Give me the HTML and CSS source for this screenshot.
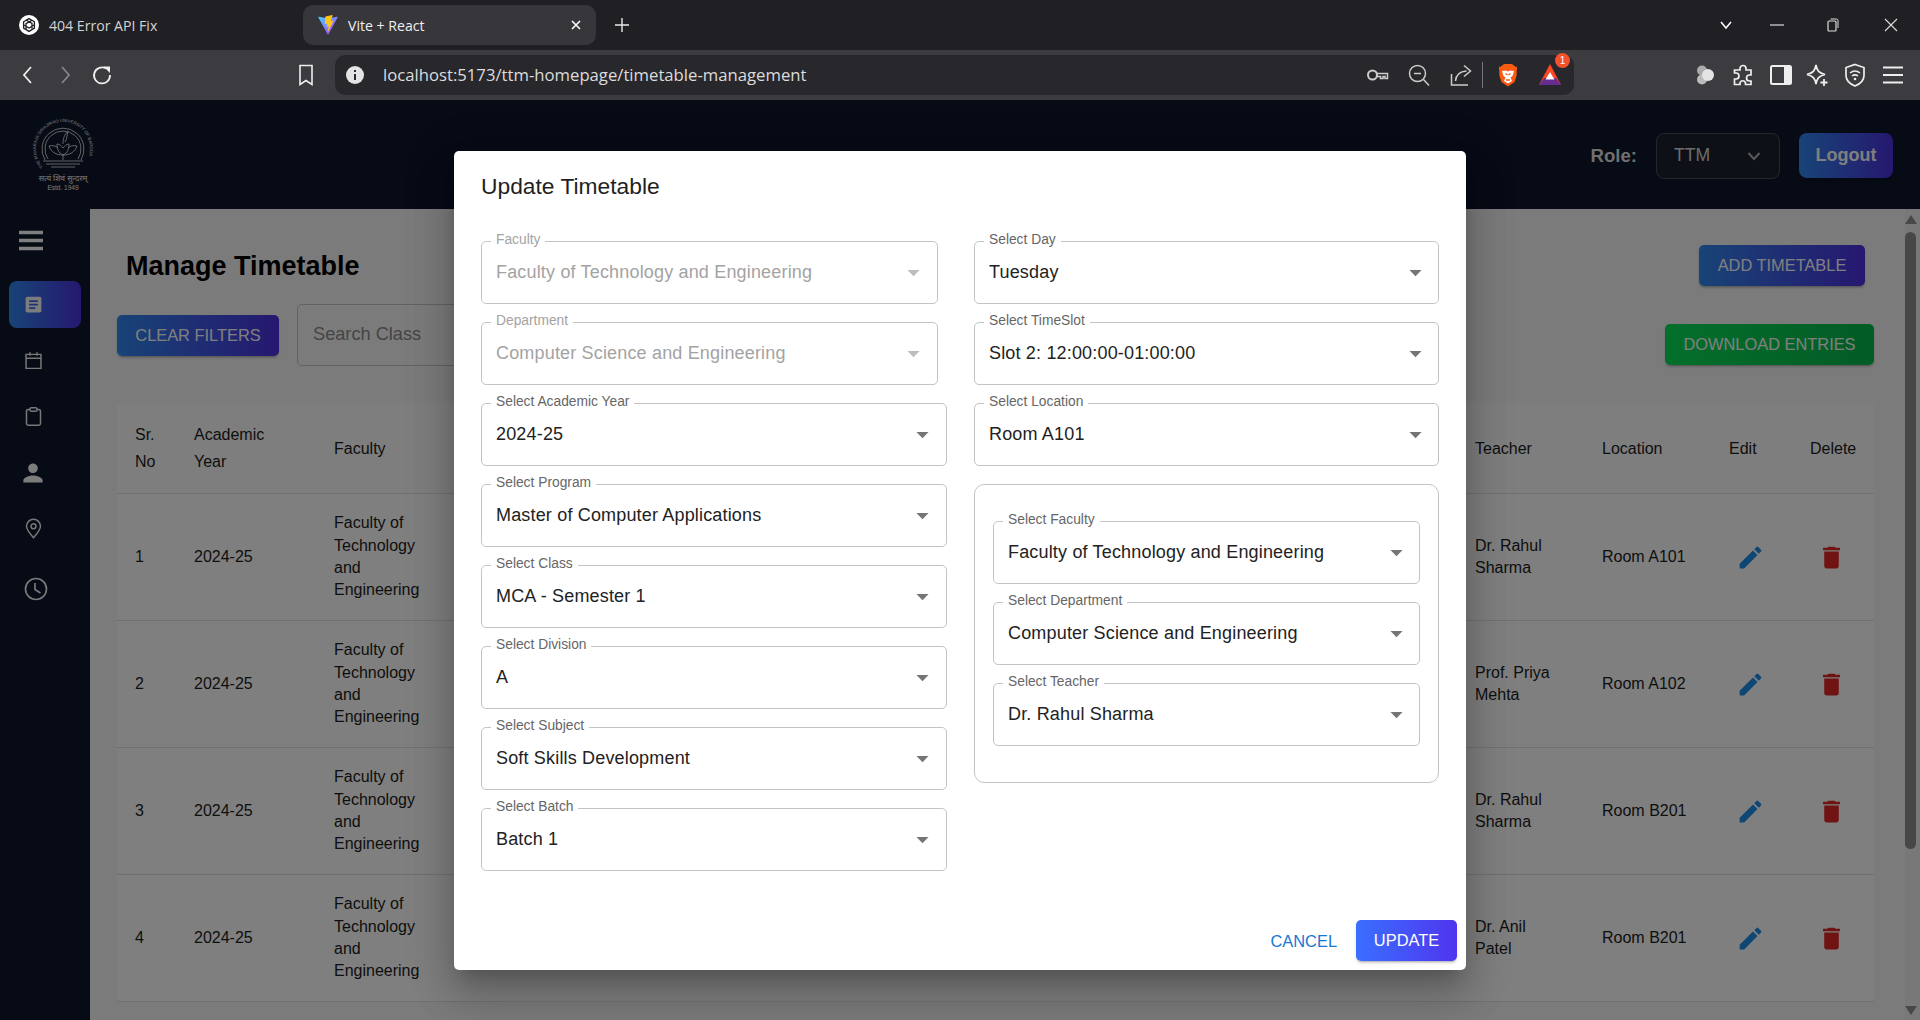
FILE: index.html
```html
<!DOCTYPE html>
<html lang="en">

<head>
    <meta charset="UTF-8">
    <title>Vite + React</title>
    <link rel="stylesheet" href="styles.css">
</head>

<body>
    <div class="tabbar">
        <div class="tab">
            <svg class="favicon" viewBox="0 0 20 20"><circle cx="10" cy="10" r="10" fill="#fff"/><g fill="none" stroke="#202024" stroke-width="1.3"><path d="M10 3.6l5.4 3.2v6.3L10 16.4l-5.4-3.3V6.8z"/><path d="M7 5l6 3.4v5.4M13 5.2L7 8.6v5.6M4.8 10l5.2 3 5.2-3"/></g></svg>
            <span>404 Error API Fix</span>
        </div>
        <div class="tab tab-active">
            <svg class="favicon" viewBox="0 0 20 20"><defs><linearGradient id="vt" x1="0" y1="0" x2="1" y2="1"><stop offset="0" stop-color="#41d1ff"/><stop offset="1" stop-color="#bd34fe"/></linearGradient></defs><path d="M19.6 2.6L10.5 19.3c-.2.4-.7.4-.9 0L.4 2.6c-.2-.4.1-.9.6-.8l9.1 1.6 8.9-1.6c.5-.1.8.4.6.8z" fill="url(#vt)"/><path d="M14.3.1L7.5 1.4c-.1 0-.2.1-.2.3l-.4 7.1c0 .2.1.3.3.3l1.9-.4c.2 0 .3.1.3.3l-.6 2.7c0 .2.1.3.3.3l1.2-.4c.2 0 .3.1.3.3l-.9 4.5c-.1.3.3.4.4.2l.1-.2 5.2-10.4c.1-.2-.1-.4-.3-.3l-2 .4c-.2 0-.3-.1-.3-.3L14.6.5c.1-.2-.1-.4-.3-.4z" fill="#ffc517"/></svg>
            <span>Vite + React</span>
            <svg class="tab-close" viewBox="0 0 10 10"><path d="M1 1l8 8M9 1L1 9" stroke="#fff" stroke-width="1.6"/></svg>
        </div>
        <svg class="new-tab" viewBox="0 0 14 14"><path d="M7 0v14M0 7h14" stroke="#e8e8e8" stroke-width="1.4"/></svg>
        <div class="window-btns">
            <svg viewBox="0 0 14 14"><path d="M2 4l5 6 5-6" fill="none" stroke="#fff" stroke-width="1.5"/></svg>
            <svg viewBox="0 0 14 14"><path d="M0 7h14" stroke="#ddd" stroke-width="1.2"/></svg>
            <svg viewBox="0 0 14 14"><rect x="2" y="3" width="8" height="10" rx="1" fill="none" stroke="#ddd" stroke-width="1.2"/><path d="M4.500 1h6a1.500 1.500 0 0 1 1.500 1.500V10" fill="none" stroke="#ddd"/></svg>
            <svg viewBox="0 0 14 14"><path d="M1 1l12 12M13 1L1 13" stroke="#ddd" stroke-width="1.1"/></svg>
        </div>
    </div>

    <div class="toolbar">
        <svg class="nav-icon" viewBox="0 0 24 24"><path d="M15 4l-7 8 7 8" fill="none" stroke="#eee" stroke-width="1.8"/></svg>
        <svg class="nav-icon nav-forward" viewBox="0 0 24 24"><path d="M9 4l7 8-7 8" fill="none" stroke="#85858a" stroke-width="1.8"/></svg>
        <svg class="nav-icon nav-reload" viewBox="0 0 24 24"><path d="M16 5.500A8 8 0 1 0 20 12" fill="none" stroke="#eee" stroke-width="1.8"/><path d="M13.500 3.500h6.500v6.500z" fill="#eee"/></svg>
        <svg class="nav-icon nav-mark" viewBox="0 0 24 24"><path d="M6 2.500h12v19l-6-4-6 4z" fill="none" stroke="#eee" stroke-width="1.6"/></svg>
        <div class="address">
            <svg class="info" viewBox="0 0 18 18"><circle cx="9" cy="9" r="9" fill="#e4e4e4"/><path d="M9 4v2M9 8v6" stroke="#2a2a2e" stroke-width="2"/></svg>
            <span class="url">localhost:5173/ttm-homepage/timetable-management</span>
            <div class="address-icons">
                <svg viewBox="0 0 24 24"><circle cx="7.500" cy="12" r="4.500" fill="none" stroke="#ccc" stroke-width="2"/><path d="M12 10.500h10.500v5H20v-2h-2v2h-2.500v-2H12" fill="none" stroke="#ccc" stroke-width="1.500"/></svg>
                <svg viewBox="0 0 24 24"><circle cx="10.500" cy="10.500" r="8" fill="none" stroke="#ccc" stroke-width="1.500"/><path d="M7 10.500h7M16.500 16.500l5.500 6" stroke="#ccc" stroke-width="1.500"/></svg>
                <svg viewBox="0 0 24 24"><path d="M2.500 11v11h16.500M6.500 18c.5-6 4-9.500 11-10" fill="none" stroke="#ccc" stroke-width="1.500"/><path d="M15 2.500l6.500 5.500-6.500 5.500" fill="none" stroke="#ccc" stroke-width="1.500"/></svg>
                <i class="address-sep"></i>
                <svg viewBox="0 0 24 24"><path d="M5 3.500L8 1h8l3 2.500 2 .5-.5 9-2 6-6.500 4.500L5.500 19l-2-6-.5-9z" fill="#fb5a12"/><path d="M6 8l4-.5 2 1 2-1 4 .5-1.500 5-2 1.500L16 18l-4 2.500L8 18l1.500-3.500-2-1.500z" fill="#fff"/><path d="M9.500 10.500l2 1.500M14.500 10.500l-2 1.500M10 17h4" stroke="#fb5a12" stroke-width="1.300"/></svg>
                <div class="bat">
                    <svg viewBox="0 0 24 24"><path d="M12 1l11 21H1z" fill="#ff4724"/><path d="M1 22l5-7h12l5 7z" fill="#662d91"/><path d="M12 9l4.500 7.500h-9z" fill="#fff"/></svg>
                    <span class="bat-count">1</span>
                </div>
            </div>
        </div>
        <div class="ext-icons">
            <svg viewBox="0 0 24 24"><circle cx="9" cy="7.500" r="5" fill="#aaa"/><circle cx="9" cy="16.500" r="5" fill="#bbb"/><circle cx="15" cy="12" r="6" fill="#e4e4e4"/></svg>
            <svg viewBox="0 0 24 24"><path d="M9 5.500a3 3 0 0 1 6 0V7h5v5h-1.500a3 3 0 0 0 0 6H20v3.500h-5.500V20a2.800 2.800 0 0 0-5.500 0v1.500H3.500V16H5a3 3 0 0 0 0-6H3.500V7H9z" fill="none" stroke="#eee" stroke-width="1.700"/></svg>
            <svg viewBox="0 0 24 24"><rect x="2" y="3" width="20" height="18" rx="1.500" fill="none" stroke="#eee" stroke-width="2"/><rect x="15" y="3" width="7" height="18" fill="#eee"/></svg>
            <svg viewBox="0 0 24 24"><path d="M11 2c1 6 3 8 9 9.500-6 1.500-8 3.500-9 9.500-1-6-3-8-9-9.500 6-1.500 8-3.500 9-9.500z" fill="none" stroke="#eee" stroke-width="1.700"/><path d="M19 16v7M15.500 19.500h7" stroke="#eee" stroke-width="1.800"/></svg>
            <svg viewBox="0 0 24 24"><path d="M12 1.500l9 3v8c0 5-4 8.500-9 10.500-5-2-9-5.500-9-10.500v-8z" fill="none" stroke="#eee" stroke-width="1.700"/><path d="M7 10c3-2.500 7-2.500 10 0M9 13c2-1.500 4-1.500 6 0" fill="none" stroke="#eee" stroke-width="1.500"/><circle cx="12" cy="16" r="1.300" fill="#eee"/></svg>
            <svg viewBox="0 0 24 24"><path d="M2 4.500h20M2 12h20M2 19.500h20" stroke="#eee" stroke-width="2"/></svg>
        </div>
    </div>

    <div class="app">
        <header class="app-header">
            <div class="logo">
                <svg class="logo-mark" viewBox="0 -8 66 62">
                    <defs><path id="logoArc" d="M13 49A27 27 0 1 1 53 49"/></defs>
                    <text class="logo-ring"><textPath href="#logoArc">THE MAHARAJA SAYAJIRAO UNIVERSITY OF BARODA</textPath></text>
                    <g fill="none" stroke="#f4f4f4" stroke-width=".8">
                        <path d="M15 42A21 21 0 1 1 51 42"/>
                        <path d="M18 41A18 18 0 1 1 48 41"/>
                        <path d="M33 37c-5-2-6-7-6-11 3 0 4 2 6 4 2-2 3-4 6-4 0 4-1 9-6 11z"/>
                        <path d="M33 37c-7 0-12-3-14-9 4-1 7 0 9 2M33 37c7 0 12-3 14-9-4-1-7 0-9 2"/>
                        <path d="M33 37v5M33 26c0-5 1-9 5-13-1 4-1 8-3 11"/>
                        <path d="M13 43h40M16 46h34M21 49h24"/>
                    </g>
                </svg>
                <span class="logo-motto">सत्यं शिवं सुन्दरम्</span>
                <span class="logo-estd">Estd. 1949</span>
            </div>
            <div class="role">
                <span class="role-label">Role:</span>
                <div class="role-select">
                    <span>TTM</span>
                    <svg viewBox="0 0 14 14"><path d="M1.500 4l5.500 6 5.500-6" fill="none" stroke="#b0b0b0" stroke-width="2"/></svg>
                </div>
                <button class="btn btn-logout">Logout</button>
            </div>
        </header>

        <div class="app-body">
            <nav class="sidebar">
                <svg class="side-burger" viewBox="0 0 24 21"><path d="M0 2.500h24M0 10.500h24M0 18.500h24" stroke="#fff" stroke-width="3.400" stroke-linecap="round"/></svg>
                <div class="side-item side-active"><svg viewBox="0 0 24 24"><path d="M19 3H5c-1.100 0-2 .9-2 2v14c0 1.100.9 2 2 2h14c1.100 0 2-.9 2-2V5c0-1.100-.9-2-2-2zm-5 14H7v-2h7v2zm3-4H7v-2h10v2zm0-4H7V7h10v2z"/></svg></div>
                <div class="side-item"><svg class="line-icon" viewBox="0 0 24 24"><path d="M3.500 5h17v16h-17zM3.500 9.500h17M8 2.500v4M16 2.500v4"/></svg></div>
                <div class="side-item"><svg class="line-icon" viewBox="0 0 24 24"><path d="M8 4H6a2 2 0 0 0-2 2v14a2 2 0 0 0 2 2h12a2 2 0 0 0 2-2V6a2 2 0 0 0-2-2h-2"/><rect x="8" y="2" width="8" height="4" rx="1.500"/></svg></div>
                <div class="side-item side-person"><svg viewBox="2 2 20 20"><path d="M12 12c2.210 0 4-1.790 4-4s-1.790-4-4-4-4 1.790-4 4 1.790 4 4 4zm0 2c-2.670 0-8 1.340-8 4v2h16v-2c0-2.660-5.330-4-8-4z"/></svg></div>
                <div class="side-item"><svg class="line-icon" viewBox="0 0 24 24"><path d="M12 22.500C7 17 4 13.500 4 9.500a8 8 0 0 1 16 0c0 4-3 7.500-8 13z"/><circle cx="12" cy="9.500" r="2.800"/></svg></div>
                <div class="side-item side-clock"><svg class="line-icon" viewBox="0 0 24 24"><circle cx="12" cy="12" r="10.500"/><path d="M11 6v6.500l5.500 3.500"/></svg></div>
            </nav>

            <main class="main">
                <div class="content">
                    <div class="page-head">
                        <h1 class="page-title">Manage Timetable</h1>
                        <button class="btn btn-add">ADD TIMETABLE</button>
                    </div>
                    <div class="filters">
                        <button class="btn btn-clear">CLEAR FILTERS</button>
                        <div class="search">Search Class</div>
                        <button class="btn btn-download">DOWNLOAD ENTRIES</button>
                    </div>

                    <div class="table-card">
                        <div class="tr tr-head">
                            <div class="td">Sr.<br>No</div>
                            <div class="td">Academic<br>Year</div>
                            <div class="td">Faculty</div>
                            <div class="td"></div>
                            <div class="td">Teacher</div>
                            <div class="td">Location</div>
                            <div class="td">Edit</div>
                            <div class="td">Delete</div>
                        </div>
                        <div class="tr">
                            <div class="td">1</div>
                            <div class="td">2024-25</div>
                            <div class="td">Faculty of Technology and Engineering</div>
                            <div class="td"></div>
                            <div class="td">Dr. Rahul Sharma</div>
                            <div class="td">Room A101</div>
                            <div class="td"><svg class="ic-edit" viewBox="0 0 24 24"><path d="M3 17.250V21h3.750L17.810 9.940l-3.750-3.750L3 17.250zM20.710 7.040c.39-.39.39-1.020 0-1.410l-2.340-2.340a.9959.9959 0 0 0-1.410 0l-1.830 1.830 3.750 3.750 1.830-1.830z"/></svg></div>
                            <div class="td"><svg class="ic-del" viewBox="0 0 24 24"><path d="M6 19c0 1.100.9 2 2 2h8c1.100 0 2-.9 2-2V7H6v12zM19 4h-3.500l-1-1h-5l-1 1H5v2h14V4z"/></svg></div>
                        </div>
                        <div class="tr">
                            <div class="td">2</div>
                            <div class="td">2024-25</div>
                            <div class="td">Faculty of Technology and Engineering</div>
                            <div class="td"></div>
                            <div class="td">Prof. Priya Mehta</div>
                            <div class="td">Room A102</div>
                            <div class="td"><svg class="ic-edit" viewBox="0 0 24 24"><path d="M3 17.250V21h3.750L17.810 9.940l-3.750-3.750L3 17.250zM20.710 7.040c.39-.39.39-1.020 0-1.410l-2.340-2.340a.9959.9959 0 0 0-1.410 0l-1.830 1.830 3.750 3.750 1.830-1.830z"/></svg></div>
                            <div class="td"><svg class="ic-del" viewBox="0 0 24 24"><path d="M6 19c0 1.100.9 2 2 2h8c1.100 0 2-.9 2-2V7H6v12zM19 4h-3.500l-1-1h-5l-1 1H5v2h14V4z"/></svg></div>
                        </div>
                        <div class="tr">
                            <div class="td">3</div>
                            <div class="td">2024-25</div>
                            <div class="td">Faculty of Technology and Engineering</div>
                            <div class="td"></div>
                            <div class="td">Dr. Rahul Sharma</div>
                            <div class="td">Room B201</div>
                            <div class="td"><svg class="ic-edit" viewBox="0 0 24 24"><path d="M3 17.250V21h3.750L17.810 9.940l-3.750-3.750L3 17.250zM20.710 7.040c.39-.39.39-1.020 0-1.410l-2.340-2.340a.9959.9959 0 0 0-1.410 0l-1.830 1.830 3.750 3.750 1.830-1.830z"/></svg></div>
                            <div class="td"><svg class="ic-del" viewBox="0 0 24 24"><path d="M6 19c0 1.100.9 2 2 2h8c1.100 0 2-.9 2-2V7H6v12zM19 4h-3.500l-1-1h-5l-1 1H5v2h14V4z"/></svg></div>
                        </div>
                        <div class="tr">
                            <div class="td">4</div>
                            <div class="td">2024-25</div>
                            <div class="td">Faculty of Technology and Engineering</div>
                            <div class="td"></div>
                            <div class="td">Dr. Anil Patel</div>
                            <div class="td">Room B201</div>
                            <div class="td"><svg class="ic-edit" viewBox="0 0 24 24"><path d="M3 17.250V21h3.750L17.810 9.940l-3.750-3.750L3 17.250zM20.710 7.040c.39-.39.39-1.020 0-1.410l-2.340-2.340a.9959.9959 0 0 0-1.410 0l-1.830 1.830 3.750 3.750 1.830-1.830z"/></svg></div>
                            <div class="td"><svg class="ic-del" viewBox="0 0 24 24"><path d="M6 19c0 1.100.9 2 2 2h8c1.100 0 2-.9 2-2V7H6v12zM19 4h-3.500l-1-1h-5l-1 1H5v2h14V4z"/></svg></div>
                        </div>
                    </div>
                </div>
                <div class="scrollbar">
                    <i class="arrow-up"></i>
                    <i class="thumb"></i>
                    <i class="arrow-down"></i>
                </div>
            </main>
        </div>

        <div class="scrim">
            <div class="dialog">
                <h2 class="dialog-title">Update Timetable</h2>
                <div class="dialog-grid">
                    <div class="col">
                        <div class="field field-disabled"><span class="field-label">Faculty</span><span>Faculty of Technology and Engineering</span><svg class="caret" viewBox="0 0 24 24"><path d="M7 10l5 5 5-5z"/></svg></div>
                        <div class="field field-disabled"><span class="field-label">Department</span><span>Computer Science and Engineering</span><svg class="caret" viewBox="0 0 24 24"><path d="M7 10l5 5 5-5z"/></svg></div>
                        <div class="field"><span class="field-label">Select Academic Year</span><span>2024-25</span><svg class="caret" viewBox="0 0 24 24"><path d="M7 10l5 5 5-5z"/></svg></div>
                        <div class="field"><span class="field-label">Select Program</span><span>Master of Computer Applications</span><svg class="caret" viewBox="0 0 24 24"><path d="M7 10l5 5 5-5z"/></svg></div>
                        <div class="field"><span class="field-label">Select Class</span><span>MCA - Semester 1</span><svg class="caret" viewBox="0 0 24 24"><path d="M7 10l5 5 5-5z"/></svg></div>
                        <div class="field"><span class="field-label">Select Division</span><span>A</span><svg class="caret" viewBox="0 0 24 24"><path d="M7 10l5 5 5-5z"/></svg></div>
                        <div class="field"><span class="field-label">Select Subject</span><span>Soft Skills Development</span><svg class="caret" viewBox="0 0 24 24"><path d="M7 10l5 5 5-5z"/></svg></div>
                        <div class="field"><span class="field-label">Select Batch</span><span>Batch 1</span><svg class="caret" viewBox="0 0 24 24"><path d="M7 10l5 5 5-5z"/></svg></div>
                    </div>
                    <div class="col col-right">
                        <div class="field"><span class="field-label">Select Day</span><span>Tuesday</span><svg class="caret" viewBox="0 0 24 24"><path d="M7 10l5 5 5-5z"/></svg></div>
                        <div class="field"><span class="field-label">Select TimeSlot</span><span>Slot 2: 12:00:00-01:00:00</span><svg class="caret" viewBox="0 0 24 24"><path d="M7 10l5 5 5-5z"/></svg></div>
                        <div class="field"><span class="field-label">Select Location</span><span>Room A101</span><svg class="caret" viewBox="0 0 24 24"><path d="M7 10l5 5 5-5z"/></svg></div>
                        <div class="teacher-box">
                            <div class="field"><span class="field-label">Select Faculty</span><span>Faculty of Technology and Engineering</span><svg class="caret" viewBox="0 0 24 24"><path d="M7 10l5 5 5-5z"/></svg></div>
                            <div class="field"><span class="field-label">Select Department</span><span>Computer Science and Engineering</span><svg class="caret" viewBox="0 0 24 24"><path d="M7 10l5 5 5-5z"/></svg></div>
                            <div class="field"><span class="field-label">Select Teacher</span><span>Dr. Rahul Sharma</span><svg class="caret" viewBox="0 0 24 24"><path d="M7 10l5 5 5-5z"/></svg></div>
                        </div>
                    </div>
                </div>
                <div class="dialog-actions">
                    <button class="btn-cancel">CANCEL</button>
                    <button class="btn btn-update">UPDATE</button>
                </div>
            </div>
        </div>
    </div>
</body>

</html>
```

FILE: styles.css
```css
* {
    margin: 0;
    padding: 0;
    box-sizing: border-box;
}

body {
    width: 1920px;
    height: 1020px;
    overflow: hidden;
    font-family: "Liberation Sans", Arial, sans-serif;
    background-color: #0c162a;
}

/* browser chrome */
.tabbar {
    display: flex;
    align-items: center;
    height: 50px;
    padding-left: 19px;
    background-color: #202024;
    font-family: "Open Sans", sans-serif;
    font-size: 14.1px;
    color: #d4d4d4;
}

.tab {
    display: flex;
    align-items: center;
    width: 284px;
    gap: 10px;
}

.favicon {
    width: 20px;
    height: 20px;
}

.tab-active {
    width: 293px;
    height: 40px;
    padding: 0 15px 0 15px;
    border-radius: 10px;
    background-color: #36363b;
    color: #f0f0f0;
}

.tab-close {
    width: 10px;
    height: 10px;
    margin-left: auto;
}

.new-tab {
    width: 14px;
    height: 14px;
    margin-left: 19px;
}

.window-btns {
    display: flex;
    align-items: center;
    margin-left: auto;
    padding-right: 22px;
}

.window-btns svg {
    width: 14px;
    height: 14px;
    margin-left: 44px;
}

.window-btns svg:nth-child(2) {
    margin-left: 37px;
}

.window-btns svg:nth-child(3) {
    margin-left: 42px;
}

.toolbar {
    display: flex;
    align-items: center;
    height: 50px;
    padding-left: 16px;
    background-color: #3b3b40;
}

.nav-icon {
    width: 24px;
    height: 24px;
}

.nav-forward {
    margin-left: 13px;
}

.nav-reload {
    margin-left: 13px;
}

.nav-mark {
    margin-left: 180px;
}

.address {
    display: flex;
    align-items: center;
    width: 1239px;
    height: 40px;
    margin-left: 17px;
    padding: 0 12px 0 11px;
    border-radius: 10px;
    background-color: #28282c;
}

.info {
    width: 18px;
    height: 18px;
}

.url {
    margin-left: 19px;
    padding-bottom: 2px;
    font-family: "Open Sans", sans-serif;
    font-size: 16.7px;
    color: #dcdcdc;
}

.address-icons {
    display: flex;
    align-items: center;
    gap: 18px;
    margin-left: auto;
}

.address-icons svg {
    display: block;
    width: 24px;
    height: 24px;
}

.address-sep {
    width: 1px;
    height: 26px;
    margin: 0 -5px 0 -9px;
    background-color: #77777c;
}

.bat {
    position: relative;
}

.bat-count {
    position: absolute;
    top: -10px;
    right: -8px;
    width: 15px;
    height: 15px;
    border-radius: 50%;
    background-color: #f4502a;
    color: #fff;
    font-size: 10px;
    line-height: 15px;
    text-align: center;
}

.ext-icons {
    display: flex;
    gap: 14px;
    margin-left: 119px;
}

.ext-icons svg {
    display: block;
    width: 24px;
    height: 24px;
}

.ext-icons svg:nth-child(3) {
    margin-right: -2px;
}

/* app */
.app {
    position: relative;
    height: 920px;
}

.app-header {
    display: flex;
    align-items: center;
    justify-content: space-between;
    height: 109px;
    padding: 0 27px 0 30px;
    background-color: #0c162a;
}

.logo {
    display: flex;
    flex-direction: column;
    align-items: center;
    width: 66px;
    color: #f4f4f4;
}

.logo-mark {
    width: 66px;
    height: 62px;
    margin-top: -8px;
}

.logo-ring {
    font-size: 4.3px;
    fill: #f4f4f4;
}

.logo-motto {
    font-family: "Noto Sans", sans-serif;
    font-size: 8px;
    line-height: 11px;
    white-space: nowrap;
}

.logo-estd {
    font-size: 6.5px;
    line-height: 9px;
}

.role {
    display: flex;
    align-items: center;
    margin-top: 2px;
}

.role-label {
    font-size: 18.6px;
    font-weight: bold;
    color: #dedede;
}

.role-select {
    display: flex;
    align-items: center;
    justify-content: space-between;
    width: 124px;
    height: 46px;
    margin-left: 19px;
    padding: 0 18px 0 17px;
    border: 1px solid #484d58;
    border-radius: 8px;
    background-color: #1a222f;
    font-size: 17.6px;
    color: #d8d8d8;
}

.role-select svg {
    width: 14px;
    height: 14px;
}

.btn {
    border: 0;
    border-radius: 5px;
    font-family: inherit;
    font-size: 16.4px;
    color: #fff;
    background: linear-gradient(90deg, #3088ee, #4c30e0);
    box-shadow: 0 3px 2px -2px rgba(0, 0, 0, .2), 0 2px 3px rgba(0, 0, 0, .14);
}

.btn-logout {
    width: 94px;
    height: 45px;
    margin-left: 19px;
    border-radius: 8px;
    font-size: 18px;
    font-weight: bold;
}

.app-body {
    display: flex;
    height: 811px;
}

.sidebar {
    display: flex;
    flex-direction: column;
    width: 90px;
    padding: 21px 9px 0;
    background-color: #0c162a;
}

.side-burger {
    width: 24px;
    height: 21px;
    margin: 0 0 30px 10px;
}

.side-item {
    display: flex;
    align-items: center;
    height: 47px;
    margin-bottom: 9px;
    padding-left: 14px;
    border-radius: 8px;
}

.side-item svg {
    width: 21px;
    height: 21px;
    fill: #f8f8f8;
}

.side-item .line-icon {
    fill: none;
    stroke: #f0f0f0;
    stroke-width: 1.7;
}

.side-active {
    background: linear-gradient(90deg, #3088ee, #4c30e0);
}

.side-person {
    padding-left: 12px;
}

.side-person svg {
    width: 24px;
    height: 24px;
}

.side-clock {
    padding-left: 15px;
}

.side-clock svg {
    width: 24px;
    height: 24px;
    margin-top: 9px;
}

.main {
    display: flex;
    flex: 1;
    min-width: 0;
    background-color: #f7f7f8;
}

.content {
    flex: 1;
    min-width: 0;
    padding: 36px 31px 0 27px;
}

.page-head {
    display: flex;
    align-items: center;
    justify-content: space-between;
    height: 41px;
    padding: 0 9px;
}

.page-title {
    padding-top: 2px;
    font-size: 27px;
    font-weight: bold;
    color: #000;
}

.btn-add {
    width: 166px;
    height: 41px;
}

.filters {
    display: flex;
    align-items: flex-start;
    height: 62px;
    margin-top: 18px;
}

.btn-clear {
    width: 162px;
    height: 41px;
    margin-top: 11px;
}

.search {
    display: flex;
    align-items: center;
    width: 420px;
    height: 62px;
    margin-left: 18px;
    padding: 0 0 1px 15px;
    border: 1px solid #c4c4c4;
    border-radius: 5px;
    font-size: 18.2px;
    color: #8a8a8a;
}

.btn-download {
    width: 209px;
    height: 41px;
    margin-top: 20px;
    margin-left: auto;
    background: linear-gradient(90deg, #09de58, #05b84a);
}

.table-card {
    margin-top: 37px;
    border-radius: 5px;
    background-color: #fff;
    font-size: 16px;
    line-height: 22.4px;
    color: #1c1c1c;
}

.tr {
    display: grid;
    grid-template-columns: 59px 140px 130px 1011px 127px 127px 81px 82px;
    align-items: center;
    height: 127px;
    border-bottom: 1px solid #e0e0e0;
}

.tr-head {
    height: 91px;
    background-color: #fcfcfc;
    line-height: 27px;
    border-radius: 5px 5px 0 0;
}

.td {
    padding: 0 18px;
}

.ic-edit,
.ic-del {
    display: block;
    width: 29px;
    height: 29px;
    margin-left: 7px;
}

.ic-edit {
    fill: #1f8ee8;
}

.ic-del {
    fill: #e02626;
}

.scrollbar {
    display: flex;
    flex-direction: column;
    align-items: center;
    width: 15px;
    padding-right: 4px;
    background-color: #f1f1f2;
}

.arrow-up,
.arrow-down {
    width: 0;
    height: 0;
    border-left: 6px solid transparent;
    border-right: 6px solid transparent;
}

.arrow-up {
    margin-top: 6px;
    border-bottom: 9px solid #909090;
}

.arrow-down {
    margin-top: 157px;
    border-top: 9px solid #909090;
}

.thumb {
    width: 11px;
    height: 617px;
    margin-top: 8px;
    border-radius: 6px;
    background-color: #8f8f8f;
}

/* dialog */
.scrim {
    position: absolute;
    top: 0;
    left: 0;
    width: 100%;
    height: 100%;
    display: flex;
    align-items: center;
    justify-content: center;
    background-color: rgba(0, 0, 0, .5);
}

.dialog {
    display: flex;
    flex-direction: column;
    width: 1012px;
    height: 819px;
    border-radius: 5px;
    background-color: #fff;
    box-shadow: 0 13px 18px -8px rgba(0, 0, 0, .2), 0 26px 40px 3px rgba(0, 0, 0, .14), 0 10px 48px 8px rgba(0, 0, 0, .12);
}

.dialog-title {
    padding: 21px 27px 0;
    height: 90px;
    font-size: 22.8px;
    font-weight: normal;
    line-height: 28px;
    color: #1f1f1f;
}

.dialog-grid {
    display: grid;
    grid-template-columns: 466px 465px;
    gap: 27px;
    padding: 0 27px;
}

.col {
    display: flex;
    flex-direction: column;
    gap: 18px;
}

.field {
    position: relative;
    display: flex;
    align-items: center;
    height: 63px;
    padding: 0 14px;
    border: 1px solid #c4c4c4;
    border-radius: 5px;
    font-size: 18px;
    letter-spacing: .17px;
    color: #222;
}

.field-disabled {
    width: 457px;
    color: #a3a3a3;
}

.field-label {
    position: absolute;
    top: -10px;
    left: 9px;
    padding: 0 5px;
    background-color: #fff;
    font-size: 13.8px;
    line-height: 16px;
    letter-spacing: 0;
    color: #666;
}

.field-disabled .field-label {
    color: #a3a3a3;
}

.caret {
    position: absolute;
    top: 16px;
    right: 9px;
    width: 29px;
    height: 29px;
    fill: #757575;
}

.col-right .caret {
    right: 8px;
}

.field-disabled .caret {
    fill: #bdbdbd;
}

.teacher-box {
    display: flex;
    flex-direction: column;
    gap: 18px;
    height: 299px;
    padding: 36px 18px 0;
    border: 1px solid #c4c4c4;
    border-radius: 10px;
}

.dialog-actions {
    display: flex;
    align-items: center;
    justify-content: flex-end;
    gap: 19px;
    margin-top: auto;
    padding: 0 9px 9px;
}

.btn-cancel {
    padding-top: 2px;
    border: 0;
    background: none;
    font-family: inherit;
    font-size: 16.4px;
    color: #1976d2;
}

.btn-update {
    width: 101px;
    height: 41px;
    background: linear-gradient(90deg, #3a6fff, #4f35ef);
}
```
